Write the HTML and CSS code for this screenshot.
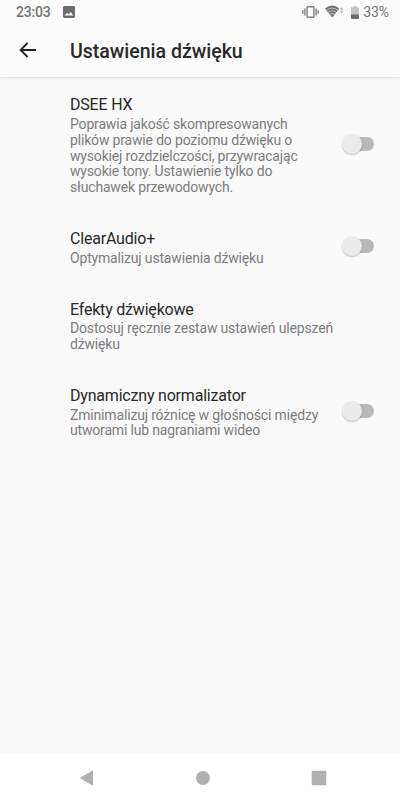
FILE: index.html
```
<!DOCTYPE html>
<html lang="pl">
<head>
<meta charset="utf-8">
<title>Ustawienia dźwięku</title>
<link rel="stylesheet" href="styles.css">
</head>
<body>
<div class="screen">
  <header class="top">
    <div class="status">
      <span class="clock">23:03</span>
      <svg class="photo" width="12" height="12" viewBox="0 0 12 12"><path fill="#6c6c6c" fill-rule="evenodd" d="M1.400 0h9.200Q12 0 12 1.400v9.200q0 1.400-1.400 1.400H1.400Q0 12 0 10.600V1.400Q0 0 1.400 0zM1.700 9.500h8.600L7.700 5.900 5.700 8.500 4.100 6.700z"/></svg>
      <span class="spacer"></span>
      <svg class="vibrate" width="17" height="14" viewBox="0 0 17 14" fill="none" stroke="#808080"><rect x="5.100" y="1.800" width="6.800" height="10.400" rx=".8" stroke-width="1.400"/><path stroke-width="1.400" d="M2.900 3.500v7M.8 5.200v3.600M14.100 3.500v7M16.200 5.200v3.600"/></svg>
      <svg class="wifi" width="19" height="14" viewBox="0 0 19 14"><path fill="#707070" d="M0 3.500Q7.200-2.300 14.400 3.500L7.200 12.600z"/><path fill="none" stroke="#fcfcfc" stroke-width=".6" d="M1.400 5.400q5.800-4.600 11.600 0M3 7.400q4.200-3.300 8.400 0M4.600 9.400q2.600-2 5.200 0"/><path fill="#b8b8b8" d="M15 4.700l1.600-3.200 1.600 3.200zM15 5.700l1.600 3.200 1.600-3.200z"/></svg>
      <svg class="battery" width="8" height="13" viewBox="0 0 8 13"><path fill="#c2c2c2" d="M2.400 0h3.200v1.300H8V9H0V1.300h2.400z"/><path fill="#6c6c6c" d="M0 8.600h8v3.600q0 .8-.8.8H.8Q0 13 0 12.200z"/></svg>
      <span class="percent">33%</span>
    </div>
    <div class="bar">
      <svg class="back" width="18" height="16" viewBox="0 0 18 16" fill="none" stroke="#212121" stroke-width="1.800"><path d="M17 8H2M8.600 1L1.600 8l7 7"/></svg>
      <h1>Ustawienia dźwięku</h1>
    </div>
  </header>
  <main>
    <section class="item">
      <div class="text"><h2>DSEE HX</h2><p>Poprawia jakość skompresowanych<br>plików prawie do poziomu dźwięku o<br>wysokiej rozdzielczości, przywracając<br>wysokie tony. Ustawienie tylko do<br>słuchawek przewodowych.</p></div>
      <span class="switch"></span>
    </section>
    <section class="item">
      <div class="text"><h2>ClearAudio+</h2><p>Optymalizuj ustawienia dźwięku</p></div>
      <span class="switch"></span>
    </section>
    <section class="item">
      <div class="text"><h2>Efekty dźwiękowe</h2><p>Dostosuj ręcznie zestaw ustawień ulepszeń<br>dźwięku</p></div>
    </section>
    <section class="item">
      <div class="text"><h2>Dynamiczny normalizator</h2><p>Zminimalizuj różnicę w głośności między<br>utworami lub nagraniami wideo</p></div>
      <span class="switch"></span>
    </section>
  </main>
  <nav class="nav">
    <svg width="16" height="16" viewBox="0 0 16 16"><path fill="#b0b0b0" stroke="#b0b0b0" stroke-linejoin="round" d="M1.500 8L13.500 1v14z"/></svg>
    <svg width="16" height="16" viewBox="0 0 16 16"><circle cx="8" cy="8" r="6.900" fill="#b0b0b0"/></svg>
    <svg width="16" height="16" viewBox="0 0 16 16"><rect x=".7" y=".7" width="14.600" height="14.600" rx="1" fill="#b0b0b0"/></svg>
  </nav>
</div>
</body>
</html>
```
FILE: styles.css
```
* { box-sizing: border-box; }
body { margin: 0; font-family: Roboto, "Liberation Sans", sans-serif; background: #fafafa; }
h1, h2, p { margin: 0; font-weight: 400; white-space: nowrap; }
svg { display: block; flex: none; }
.screen { width: 400px; height: 800px; display: flex; flex-direction: column; overflow: hidden; }
.top { height: 77px; background: #fcfcfc; box-shadow: 0 1px 2px rgba(0, 0, 0, .13); flex: none; }
.status { height: 24px; display: flex; align-items: center; padding: 0 11px 0 16px; color: #737373; font-size: 14px; letter-spacing: -.1px; }
.clock { font-weight: 500; letter-spacing: -.2px; }
.photo { margin-left: 12px; }
.spacer { flex: 1; }
.wifi { margin-left: 6px; }
.battery { margin-left: 7px; }
.percent { margin-left: 4px; }
.bar { height: 53px; display: flex; align-items: center; padding-left: 19px; }
.back { margin-top: -1px; }
.bar h1 { margin: 1px 0 0 33px; font-size: 19.6px; font-weight: 500; letter-spacing: -.04px; color: #2a2a2a; }
main { flex: 1; padding-top: .8px; }
.item { display: flex; align-items: center; justify-content: space-between; padding: 15.6px 26px 15.6px 70px; }
.item h2 { font-size: 16px; letter-spacing: -.2px; line-height: 23.4px; color: #282828; }
.item p { font-size: 14px; letter-spacing: -.17px; line-height: 15.87px; color: #7c7c7c; }
.switch { width: 32px; height: 20px; margin-top: -2px; display: flex; align-items: center; position: relative; flex: none; }
.switch::before { content: ""; width: 28px; height: 14px; margin-left: 4px; border-radius: 7px; background: #b9b9b9; }
.switch::after { content: ""; position: absolute; left: 0; top: 0; width: 20px; height: 20px; border-radius: 50%; background: #ececec; box-shadow: 0 1px 1.5px rgba(0, 0, 0, .25); }
.nav { height: 47px; flex: none; background: #fff; display: flex; align-items: center; justify-content: space-between; padding: 2px 73px 0 79px; }
```
